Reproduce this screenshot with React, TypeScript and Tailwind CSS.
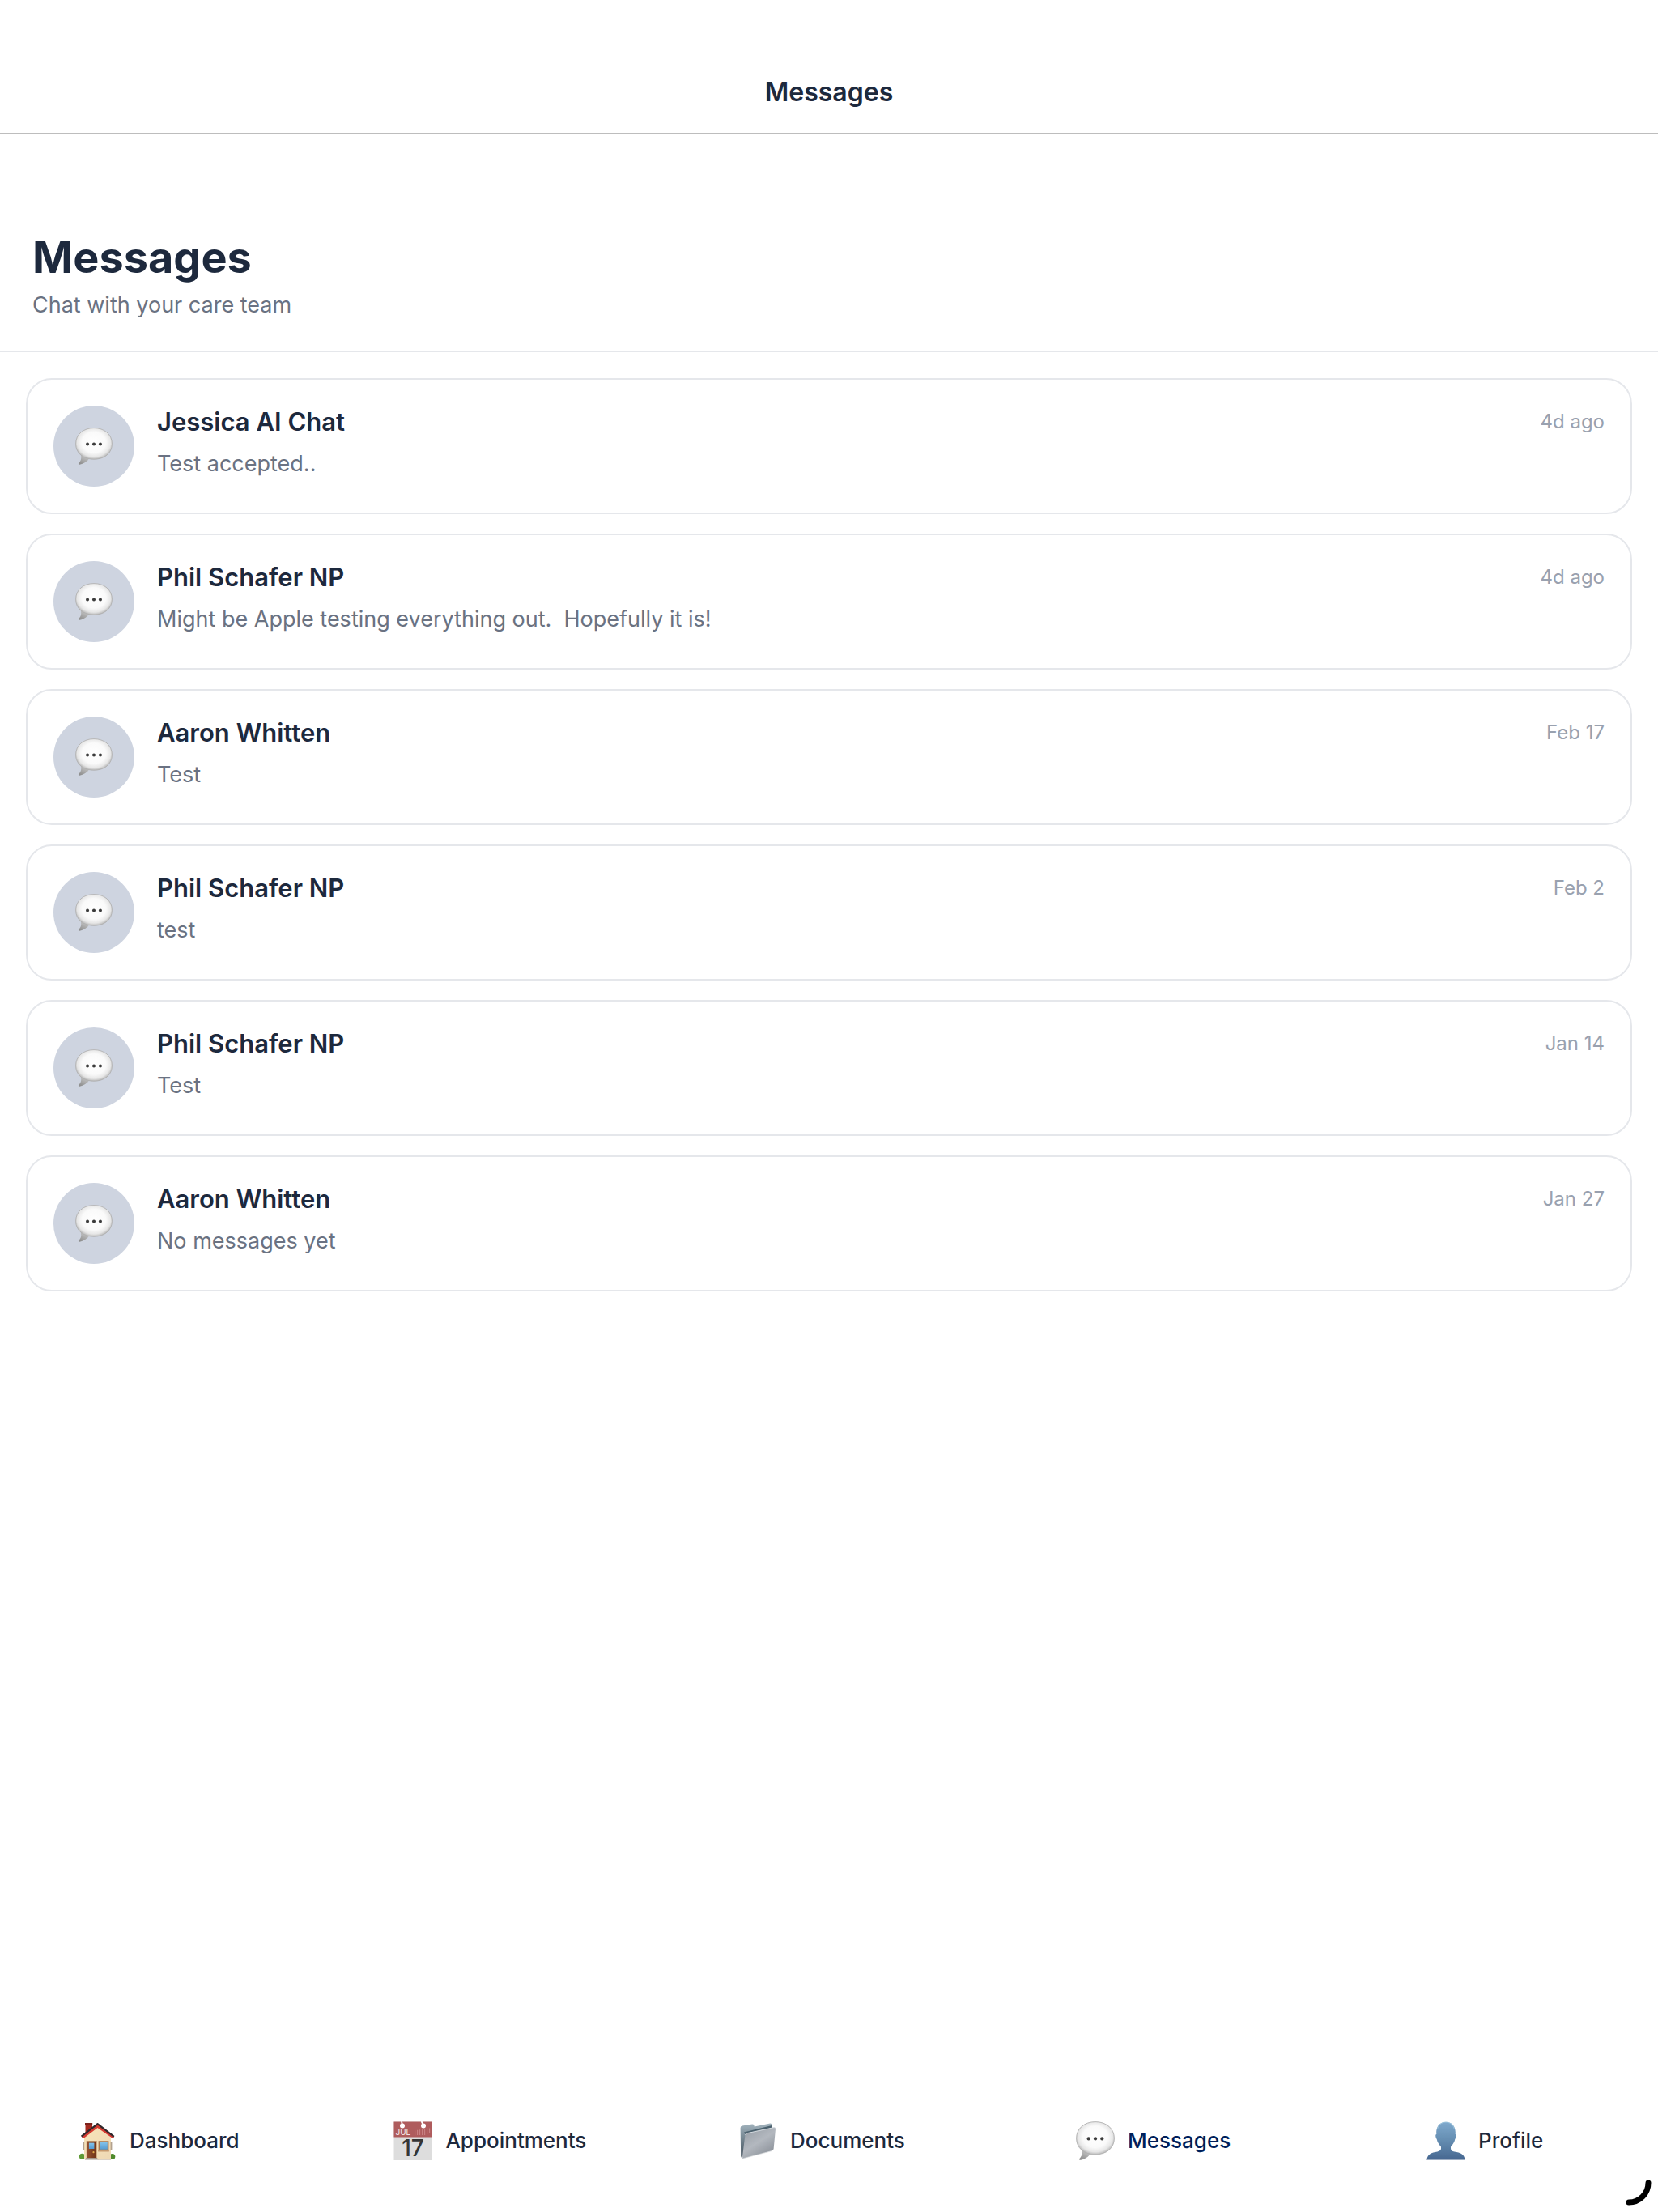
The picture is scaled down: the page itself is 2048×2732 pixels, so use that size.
import React from "react";

interface Conversation {
  name: string;
  preview: string;
  time: string;
}

const conversations: Conversation[] = [
  { name: "Jessica AI Chat", preview: "Test accepted..", time: "4d ago" },
  { name: "Phil Schafer NP", preview: "Might be Apple testing everything out.  Hopefully it is!", time: "4d ago" },
  { name: "Aaron Whitten", preview: "Test", time: "Feb 17" },
  { name: "Phil Schafer NP", preview: "test", time: "Feb 2" },
  { name: "Phil Schafer NP", preview: "Test", time: "Jan 14" },
  { name: "Aaron Whitten", preview: "No messages yet", time: "Jan 27" },
];

const BubbleIcon: React.FC<{ id: string; className: string }> = ({ id, className }) => (
  <svg viewBox="0 0 48 48" className={className} aria-hidden="true">
    <defs>
      <radialGradient id={`${id}-body`} cx="0.5" cy="0.46" r="0.55">
        <stop offset="0" stopColor="#ffffff" />
        <stop offset="0.6" stopColor="#fafafa" />
        <stop offset="0.84" stopColor="#e6e6e6" />
        <stop offset="1" stopColor="#b4b4b4" />
      </radialGradient>
      <linearGradient id={`${id}-tail`} x1="0.7" y1="0" x2="0.2" y2="1">
        <stop offset="0" stopColor="#cfcfcf" />
        <stop offset="1" stopColor="#8c8c8c" />
      </linearGradient>
    </defs>
    <path
      d="M6.5 34 C8.4 39 7.8 42.5 4.4 46 C3.7 47 4.2 48 5.6 47.8 C10.6 47 15.4 44 18.5 39.5 Z"
      fill={`url(#${id}-tail)`}
    />
    <path
      d="M24 .6 C37.5 .6 47.4 8.8 47.4 21 C47.4 33 37.8 40.9 24 40.9 C10.2 40.9 .6 33 .6 21 C.6 8.8 10.5 .6 24 .6 Z"
      fill={`url(#${id}-body)`}
      stroke="#b0b0b0"
      strokeWidth="0.9"
    />
    <g fill="#3c3c3c">
      <circle cx="15.7" cy="21.4" r="2.1" />
      <circle cx="24" cy="21.4" r="2.1" />
      <circle cx="32.3" cy="21.4" r="2.1" />
    </g>
  </svg>
);

const HouseIcon: React.FC = () => (
  <svg viewBox="0 0 48 48" className="size-12" aria-hidden="true">
    <defs>
      <linearGradient id="house-wall" x1="0" y1="0" x2="1" y2="1">
        <stop offset="0" stopColor="#f8e3b8" />
        <stop offset="1" stopColor="#eed9b5" />
      </linearGradient>
      <linearGradient id="house-glass" x1="0" y1="0" x2="0" y2="1">
        <stop offset="0" stopColor="#83c3ea" />
        <stop offset="1" stopColor="#559bd0" />
      </linearGradient>
      <linearGradient id="house-door" x1="0" y1="0" x2="1" y2="0">
        <stop offset="0" stopColor="#93502f" />
        <stop offset="1" stopColor="#713418" />
      </linearGradient>
    </defs>
    <rect x="9.5" y="2" width="8.5" height="15" fill="#a52a20" />
    <rect x="9" y="2" width="9.2" height="2" fill="#7c211b" />
    <circle cx="5.5" cy="43.4" r="3.6" fill="#5e9a35" />
    <circle cx="42.8" cy="43.4" r="3.5" fill="#4f8a2c" />
    <path d="M8 20 L24.5 6 L41 20 V46.5 H8 Z" fill="url(#house-wall)" />
    <path d="M6.6 25 h1.6 v10 h-1.6z M40.6 25 h1.8 v10 h-1.8z" fill="#b3a28e" />
    <path d="M4.6 18.6 L24.5 2.4 L44.8 18.8 L43.8 21.4 L24.5 8 L6.6 21.4 Z" fill="#d53a31" />
    <path d="M4.6 18.6 L24.5 3.2 L44.8 18.8" fill="none" stroke="#30282b" strokeWidth="2.2" strokeLinejoin="round" />
    <rect x="10.8" y="24" width="12.8" height="21.5" fill="#b88c61" />
    <rect x="12" y="25" width="10.6" height="20" fill="url(#house-door)" />
    <rect x="13.9" y="26.6" width="6.5" height="7.4" fill="url(#house-glass)" />
    <circle cx="19.5" cy="38.2" r="1.1" fill="#e0a94b" />
    <rect x="25.6" y="24.2" width="12.8" height="12.6" fill="#a8794f" />
    <rect x="27.2" y="25.7" width="9.6" height="9" fill="url(#house-glass)" />
    <rect x="25.2" y="36" width="13.6" height="1.5" fill="#c79b70" />
    <path d="M10.5 45 H24 L25.4 47.6 H8.8 Z" fill="#a4978b" />
    <rect x="25" y="46" width="16" height="1.5" fill="#b9a58b" />
  </svg>
);

const CalendarIcon: React.FC = () => (
  <svg viewBox="0 0 48 48" className="size-12 overflow-visible" aria-hidden="true">
    <rect x="0.5" y="0.5" width="47" height="47.5" fill="#dddddd" />
    <rect x="0.5" y="0.5" width="47" height="19" fill="#af5c5d" />
    <circle cx="11" cy="5.4" r="3" fill="#ffffff" />
    <circle cx="37" cy="5.4" r="3" fill="#ffffff" />
    <path d="M11 5 L10 0 M37 5 L34.6 0" stroke="#ffffff" strokeWidth="1.8" />
    <text x="2.4" y="17" fontFamily="Inter, sans-serif" fontSize="10" fill="#f0dddd">JUL</text>
    <path
      d="M26.6 11.5 V17 M29.6 10.8 V17 M32.6 10.2 V17 M35.6 9.6 V17 M38.6 9 V17 M41.6 8.6 V16 M44.6 8.4 V14"
      stroke="#c98283"
      strokeWidth="1.1"
    />
    <text x="24" y="43" textAnchor="middle" fontFamily="Inter, sans-serif" fontSize="28" fontWeight="500" fill="#353535">17</text>
  </svg>
);

const FolderIcon: React.FC = () => (
  <svg viewBox="0 0 48 48" className="size-12" aria-hidden="true">
    <defs>
      <linearGradient id="folder-front" x1="0.1" y1="0" x2="0.8" y2="1">
        <stop offset="0" stopColor="#959ca4" />
        <stop offset="0.5" stopColor="#b3b8bf" />
        <stop offset="1" stopColor="#868c94" />
      </linearGradient>
      <linearGradient id="folder-back" x1="0" y1="0" x2="0" y2="1">
        <stop offset="0" stopColor="#a3b4be" />
        <stop offset="0.35" stopColor="#7d8e99" />
        <stop offset="1" stopColor="#3f4d58" />
      </linearGradient>
    </defs>
    <path d="M2.6 8.2 Q2.6 6 4.8 5.6 L17 3.4 Q18.6 3.2 19.2 4.6 L19.8 6.6 L39.4 2.6 Q41.4 2.4 41.4 4.4 V36 L5.6 45.4 Q3.4 45.4 3.2 43 Z" fill="url(#folder-back)" />
    <path d="M7 13.5 L41.4 5 V10 L9 17 Z" fill="#4b616e" />
    <path d="M8.4 17.2 Q8.6 15 10.8 14.5 L44 7.4 Q46.4 7.2 46 9.6 L43.6 34 Q43.2 36 41.2 36.6 L6.6 45.6 Q4.8 45.8 5 43.6 Z" fill="url(#folder-front)" />
    <path d="M8.6 17 Q8.8 15.2 10.8 14.7 L44 7.6 Q45.4 7.4 45.9 8.6" fill="none" stroke="#dbe1e5" strokeWidth="0.9" />
    <path d="M5 44 Q5 45.8 6.6 45.6 L41.2 36.6" fill="none" stroke="#d8dadd" strokeWidth="0.8" />
  </svg>
);

const PersonIcon: React.FC = () => (
  <svg viewBox="0 0 48 48" className="size-12" aria-hidden="true">
    <defs>
      <linearGradient id="person-fill" x1="0" y1="0" x2="0" y2="1">
        <stop offset="0" stopColor="#7fa9cd" />
        <stop offset="0.45" stopColor="#668fb3" />
        <stop offset="1" stopColor="#466790" />
      </linearGradient>
    </defs>
    <path
      d="M24 .8 C31.5 .8 35.7 6 35.8 13.6 L35.7 16 C37.4 16 36.8 20 35.3 22 C34.6 25.6 32.5 29 30.2 31 C29.4 34.5 30.6 36.8 34.5 37.4 C42 38.4 46.6 40 47.6 47.6 H.4 C1.4 40 6 38.4 13.5 37.4 C17.4 36.8 18.6 34.5 17.8 31 C15.5 29 13.4 25.6 12.7 22 C11.2 20 10.6 16 12.3 16 L12.2 13.6 C12.3 6 16.5 .8 24 .8 Z"
      fill="url(#person-fill)"
    />
    <path d="M13.5 10 C14.8 4.2 18.5 1.2 24 1.2 C29.5 1.2 33.2 4.2 34.5 10" fill="none" stroke="#9fc8df" strokeWidth="0.8" />
    <path d="M.4 47.3 H47.6" stroke="#9aaac0" strokeWidth="0.8" />
  </svg>
);

const tabs = [
  { label: "Dashboard", icon: <HouseIcon /> },
  { label: "Appointments", icon: <CalendarIcon /> },
  { label: "Documents", icon: <FolderIcon /> },
  { label: "Messages", icon: <BubbleIcon id="tab" className="size-12" />, active: true },
  { label: "Profile", icon: <PersonIcon /> },
];

const App: React.FC = () => {
  return (
    <div className="relative flex min-h-screen flex-col overflow-hidden bg-white font-['Inter',sans-serif] text-slate-800">
      {/* Navigation bar */}
      <header className="border-b border-[#bdbdbd] pt-[94px] pb-[30px] text-center">
        <p className="text-[32px] leading-10 font-semibold">Messages</p>
      </header>

      <main className="flex-1">
        <div className="border-b-2 border-gray-200 px-10 pt-[121px] pb-9">
          <h1 className="text-[54px] leading-16 font-bold">Messages</h1>
          <p className="mt-[7px] text-[27px] leading-10 text-gray-500">Chat with your care team</p>
        </div>

        {/* Conversation list */}
        <ul className="flex flex-col gap-6 p-8">
          {conversations.map((chat, i) => (
            <li key={i}>
              <button type="button" className="flex w-full gap-7 rounded-[32px] border-2 border-gray-200 p-8 text-left">
                <span className="flex size-[100px] shrink-0 items-center justify-center rounded-full bg-[#ced4e0]">
                  <BubbleIcon id={`chat-${i}`} className="size-[46px]" />
                </span>
                <span className="flex min-w-0 flex-1 flex-col gap-3">
                  <span className="flex items-center justify-between">
                    <span className="text-[31px] leading-10 font-semibold">{chat.name}</span>
                    <span className="text-2xl leading-10 text-gray-400">{chat.time}</span>
                  </span>
                  <span className="text-[27px] leading-10 whitespace-pre text-gray-500">{chat.preview}</span>
                </span>
              </button>
            </li>
          ))}
        </ul>
      </main>

      {/* Tab bar */}
      <nav className="grid grid-cols-5 pb-16">
        {tabs.map((tab) => (
          <a
            key={tab.label}
            href="#"
            aria-current={tab.active ? "page" : undefined}
            className={`flex items-center justify-center gap-4 pr-[18px] text-[26px] leading-10 font-medium ${tab.active ? "text-[#001f5b]" : "text-slate-800"}`}
          >
            {tab.icon}
            <span>{tab.label}</span>
          </a>
        ))}
      </nav>

      {/* Resize handle over the corner */}
      <svg viewBox="0 0 40 40" className="absolute right-1 bottom-1 size-10" aria-hidden="true">
        <path d="M32 8 A24 24 0 0 1 8 32" fill="none" stroke="#000000" strokeWidth="7" strokeLinecap="round" />
      </svg>
    </div>
  );
};

export default App;
